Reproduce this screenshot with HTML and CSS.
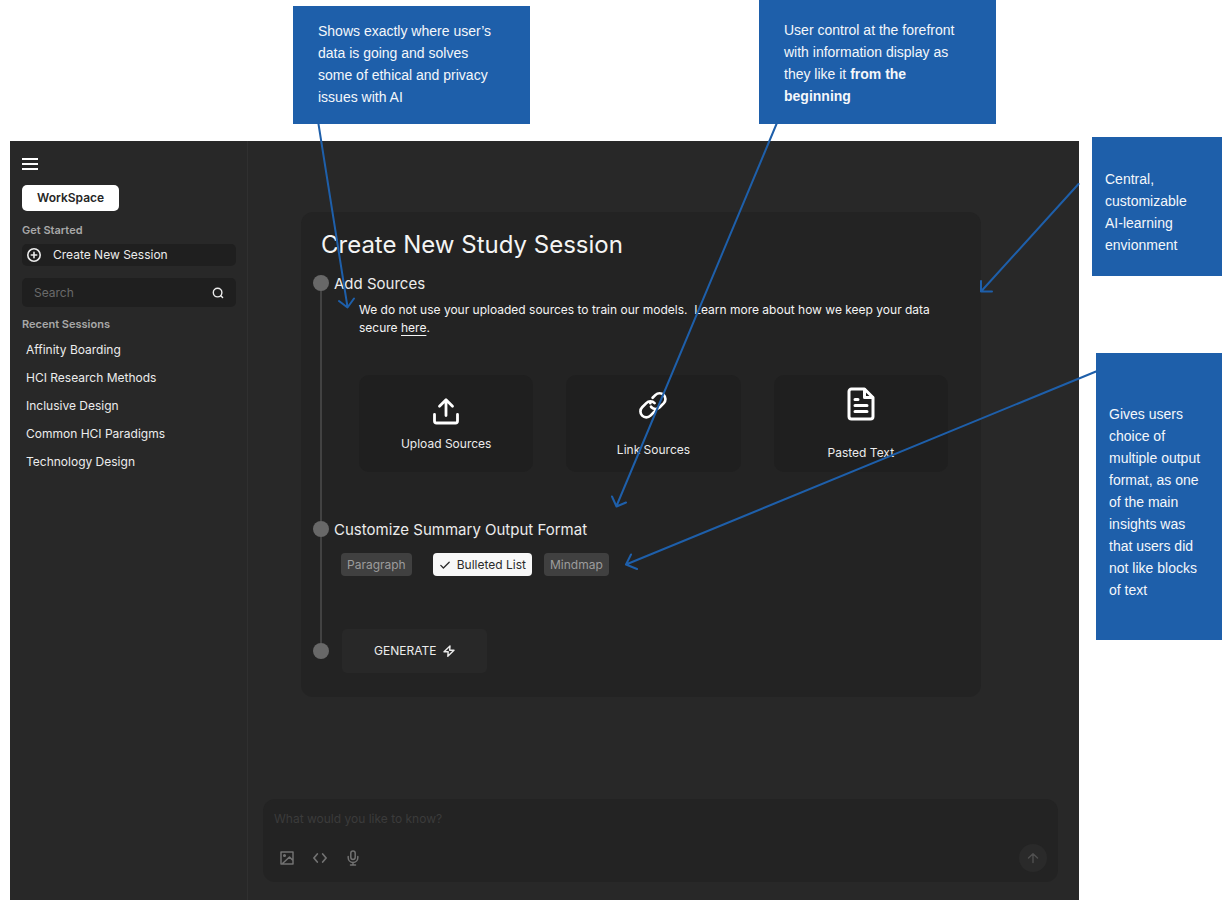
FILE: index.html
```html
<!DOCTYPE html>
<html lang="en">
<head>
<meta charset="utf-8">
<title>Create New Study Session</title>
<link rel="stylesheet" href="styles.css">
</head>
<body>
<div class="board">
  <div class="stage">
    <div class="top-notes">
      <aside class="note note-privacy">Shows exactly where user’s data is going and solves some of ethical and privacy issues with AI</aside>
      <aside class="note note-control">User control at the forefront with information display as they like it <strong>from the beginning</strong></aside>
    </div>
    <div class="app">
      <nav class="sidebar">
        <button class="menu-button" aria-label="Menu">
          <svg width="16" height="14" viewBox="0 0 16 14" fill="none" stroke="currentColor" stroke-width="2"><path d="M0 2h16M0 7h16M0 12h16"/></svg>
        </button>
        <button class="workspace">WorkSpace</button>
        <h2 class="side-heading">Get Started</h2>
        <button class="create">
          <svg width="16" height="16" viewBox="0 0 16 16" fill="none" stroke="currentColor" stroke-width="1.6" stroke-linecap="round"><circle cx="8" cy="8" r="6.2"/><path d="M8 5.3v5.4M5.3 8h5.4"/></svg>
          Create New Session
        </button>
        <div class="search">
          <input type="search" aria-label="Search" placeholder="Search">
          <svg width="12" height="12" viewBox="0 0 12 12" fill="none" stroke="currentColor" stroke-width="1.4" stroke-linecap="round"><circle cx="5.6" cy="5.6" r="4.3"/><path d="M8.800 8.800l1.800 1.800"/></svg>
        </div>
        <h2 class="side-heading recent-heading">Recent Sessions</h2>
        <ul class="recent">
          <li><a href="#">Affinity Boarding</a></li>
          <li><a href="#">HCI Research Methods</a></li>
          <li><a href="#">Inclusive Design</a></li>
          <li><a href="#">Common HCI Paradigms</a></li>
          <li><a href="#">Technology Design</a></li>
        </ul>
      </nav>
      <main class="main">
        <section class="card">
          <h1 class="card-title">Create New Study Session</h1>
          <div class="step">
            <div class="rail"><span class="dot"></span><span class="line"></span></div>
            <div class="step-body sources-step">
              <h2 class="step-title">Add Sources</h2>
              <p class="policy">We do not use your uploaded sources to train our models.&nbsp; Learn more about how we keep your data secure <a href="#">here</a>.</p>
              <div class="tiles">
                <button class="tile tile-upload">
                  <svg width="32" height="32" viewBox="0 0 32 32" fill="none" stroke="currentColor" stroke-width="2.8" stroke-linecap="round" stroke-linejoin="round"><path d="M4.500 19.500v6.500a2 2 0 0 0 2 2h19a2 2 0 0 0 2-2v-6.500M16 20.500V5M9.500 11.200L16 4.700l6.500 6.500"/></svg>
                  Upload Sources
                </button>
                <button class="tile tile-link">
                  <svg width="32" height="32" viewBox="0 0 24 24" fill="none" stroke="currentColor" stroke-width="2" stroke-linecap="round" stroke-linejoin="round"><path d="M13.200 9.860a4.400 4.400 0 0 0-6.220 0l-3.110 3.110a4.400 4.400 0 0 0 6.220 6.230l3.110-3.110a4.400 4.400 0 0 0 .9-1.400"/><path d="M10 9.900a4.400 4.400 0 0 0 .8 3.070a4.400 4.400 0 0 0 6.220 0l3.100-3.110a4.400 4.400 0 0 0-6.220-6.220l-2.200 2.200" stroke-dasharray="0 2.600 40"/></svg>
                  Link Sources
                </button>
                <button class="tile tile-text">
                  <svg width="36" height="36" viewBox="0 0 36 36" fill="none" stroke="currentColor" stroke-width="3" stroke-linecap="round" stroke-linejoin="round"><path d="M21.500 3H8.500A2.500 2.500 0 0 0 6 5.500v25A2.500 2.500 0 0 0 8.500 33h19a2.500 2.500 0 0 0 2.500-2.500v-19z"/><path d="M21.500 3.500V11.500H29.500"/><path d="M12 13.500h3M12 19.500h12M12 25.500h12"/></svg>
                  Pasted Text
                </button>
              </div>
            </div>
          </div>
          <div class="step">
            <div class="rail"><span class="dot"></span><span class="line"></span></div>
            <div class="step-body format-step">
              <h2 class="step-title">Customize Summary Output Format</h2>
              <div class="chips">
                <button class="chip chip-paragraph" aria-pressed="false">Paragraph</button>
                <button class="chip chip-selected" aria-pressed="true">
                  <svg width="12" height="12" viewBox="0 0 12 12" fill="none" stroke="currentColor" stroke-width="1.300" stroke-linecap="round" stroke-linejoin="round"><path d="M1.800 6.400l2.600 2.600 5.800-5.800"/></svg>
                  Bulleted List
                </button>
                <button class="chip" aria-pressed="false">Mindmap</button>
              </div>
            </div>
          </div>
          <div class="step">
            <div class="rail"><span class="line"></span><span class="dot"></span><span class="spacer"></span></div>
            <button class="generate">
              GENERATE
              <svg width="12" height="12" viewBox="0 0 12 12" fill="none" stroke="currentColor" stroke-width="1.400" stroke-linejoin="round"><path d="M7 1L1 6.800h4.200L4.800 11.200 11 5.200H6.700z"/></svg>
            </button>
          </div>
        </section>
        <form class="composer">
          <textarea class="prompt" rows="1" aria-label="Prompt" placeholder="What would you like to know?"></textarea>
          <div class="tools">
            <button type="button" class="tool" aria-label="Add image"><svg width="14" height="14" viewBox="0 0 14 14" fill="none" stroke="currentColor" stroke-width="1.500" stroke-linejoin="round"><path d="M1 1h12v12H1zM2.500 12.500l7-6.500L13 9.500"/><circle cx="4.500" cy="4.500" r=".8"/></svg></button>
            <button type="button" class="tool" aria-label="Add code"><svg width="14" height="14" viewBox="0 0 14 14" fill="none" stroke="currentColor" stroke-width="1.700" stroke-linecap="round" stroke-linejoin="round"><path d="M4.300 3L.9 7l3.400 4M9.700 3l3.400 4-3.400 4"/></svg></button>
            <button type="button" class="tool" aria-label="Voice input"><svg width="14" height="16" viewBox="0 0 14 16" fill="none" stroke="currentColor" stroke-width="1.500" stroke-linecap="round"><rect x="4.800" y="1" width="4.400" height="8.500" rx="2.200"/><path d="M2.200 6.500v1.200a4.800 4.800 0 0 0 9.600 0V6.500M7 12.500V15M4.500 15h5"/></svg></button>
            <button class="send" aria-label="Send"><svg width="12" height="12" viewBox="0 0 12 12" fill="none" stroke="currentColor" stroke-width="1.400" stroke-linecap="round" stroke-linejoin="round"><path d="M6 10.500V1.800M1.500 6L6 1.800 10.500 6"/></svg></button>
          </div>
        </form>
      </main>
    </div>
  </div>
  <div class="side-notes">
    <aside class="note note-central">Central, customizable <span class="keep">AI-learning</span> envionment</aside>
    <aside class="note note-output">Gives users choice of multiple output format, as one of the main insights was that users did not like blocks of text</aside>
  </div>
  <svg class="arrows" width="1227" height="914" viewBox="0 0 1227 914" fill="none" stroke="currentColor" stroke-width="2" stroke-linecap="round" stroke-linejoin="round" aria-hidden="true">
    <path d="M318.500 124L347.500 307M339 301l8.500 6.500L354 298.500"/>
    <path d="M776.500 124L616.500 506M612 496.500l4.500 10L626 502.500"/>
    <path d="M1078.500 184L981 291.500M981 281v10.500h11"/>
    <path d="M1096 371.500L626 564.500M631 554.500l-5 10L637 569"/>
  </svg>
</div>
</body>
</html>
```
FILE: styles.css
```css
* { box-sizing: border-box; }

body {
  margin: 0;
  background: #fff;
  font-family: Inter, "Liberation Sans", sans-serif;
  font-size: 12px;
  line-height: 16px;
  color: #ececec;
}

h1, h2, p, ul { margin: 0; padding: 0; font-weight: 400; }
ul { list-style: none; }
svg { display: block; flex: none; }
a { color: inherit; }

button, input, textarea {
  margin: 0;
  padding: 0;
  border: 0;
  background: none;
  font: inherit;
  color: inherit;
}

.board {
  position: relative;
  display: grid;
  grid-template-columns: 1fr 130px;
  column-gap: 13px;
  min-height: 100vh;
  padding: 0 5px 14px 10px;
}

.stage { display: flex; flex-direction: column; }

/* Annotations */
.note {
  background: #1e5faa;
  color: #f4f7fb;
  font-family: "Liberation Sans", Arial, sans-serif;
  font-size: 14px;
  line-height: 22px;
}

.top-notes {
  display: flex;
  align-items: flex-end;
  gap: 229px;
  margin-left: 283px;
  margin-bottom: 17px;
}

.note-privacy { width: 237px; padding: 14px 32px 16px 25px; }
.note-control { width: 237px; padding: 19px 32px 17px 25px; }
.side-notes { padding-top: 137px; }
.note-central { padding: 31px 13px 20px; }
.note-output { margin: 77px 0 0 4px; padding: 50px 13px 39px; }
.keep { white-space: nowrap; }

.arrows {
  position: absolute;
  top: 0;
  left: 0;
  color: #1e5faa;
  pointer-events: none;
}

/* Application window */
.app {
  flex: 1;
  display: flex;
  background: #282828;
}

.sidebar {
  display: flex;
  flex-direction: column;
  align-items: stretch;
  width: 238px;
  padding: 16px 11px 16px 12px;
  border-right: 1px solid #303030;
}

.menu-button { align-self: flex-start; height: 14px; color: #fff; }

.workspace {
  align-self: flex-start;
  height: 26px;
  margin-top: 14px;
  padding: 0 15px;
  border-radius: 5px;
  background: #fff;
  color: #262626;
  font-weight: 600;
}

.side-heading {
  margin-top: 11px;
  color: #a8a8a8;
  font-size: 11px;
  font-weight: 600;
}

.create {
  display: flex;
  align-items: center;
  gap: 11px;
  height: 22px;
  margin-top: 6px;
  padding: 0 4px;
  border-radius: 5px;
  background: #1f1f1f;
}

.search {
  display: flex;
  align-items: center;
  height: 29px;
  margin-top: 12px;
  padding: 0 12px;
  border-radius: 5px;
  background: #1f1f1f;
}

.search input { flex: 1; min-width: 0; outline: 0; }
.search input::placeholder { color: #6a6a6a; opacity: 1; }
.recent-heading { margin-top: 9px; }

.recent {
  display: flex;
  flex-direction: column;
  gap: 12px;
  margin-top: 10px;
  padding-left: 4px;
}

.recent a { text-decoration: none; }

.main {
  flex: 1;
  display: flex;
  flex-direction: column;
  padding: 71px 21px 18px 15px;
}

/* Study session card */
.card {
  margin: 0 77px 24px 38px;
  padding: 17px 33px 24px 12px;
  border-radius: 12px;
  background: #232323;
}

.card-title {
  margin: 0 0 14px 8px;
  color: #f4f4f4;
  font-size: 24px;
  line-height: 32px;
}

.step { display: flex; gap: 5px; }
.step-body { flex: 1; min-width: 0; }

.rail {
  display: flex;
  flex-direction: column;
  align-items: center;
  width: 16px;
}

.dot { width: 16px; height: 16px; border-radius: 50%; background: #686868; }
.line { flex: 1; width: 2px; background: #424242; }
.spacer { flex: 1; }
.step-title { font-size: 15px; line-height: 18px; }
.policy { margin: 8px 0 0 25px; line-height: 18px; color: #f4f4f4; }
.policy a { text-underline-offset: 3px; }
.sources-step { padding-bottom: 49px; }
.format-step { padding-bottom: 53px; }

.tiles {
  display: grid;
  grid-template-columns: repeat(3, 1fr);
  gap: 33px;
  margin: 38px 0 0 25px;
}

.tile {
  display: flex;
  flex-direction: column;
  align-items: center;
  justify-content: center;
  height: 97px;
  border-radius: 10px;
  background: #1f1f1f;
}

.tile svg { color: #fff; }
.tile-upload { gap: 9px; }
.tile-link { gap: 20px; }
.tile-text { gap: 23px; }

.chips { display: flex; gap: 12px; margin: 14px 0 0 7px; }

.chip {
  display: flex;
  align-items: center;
  gap: 6px;
  height: 23px;
  padding: 0 6px;
  border-radius: 4px;
  background: #404040;
  color: #9c9c9c;
}

.chip-paragraph { margin-right: 9px; }
.chip-selected { background: #f7f7f7; color: #2a2a2a; }

.generate {
  display: flex;
  align-items: center;
  gap: 7px;
  height: 44px;
  margin-left: 8px;
  padding: 0 32px;
  border-radius: 5px;
  background: #282828;
}

/* Prompt composer */
.composer {
  margin-top: auto;
  padding: 12px 11px 10px;
  border-radius: 12px;
  background: #232323;
}

.prompt {
  display: block;
  width: 100%;
  height: 16px;
  resize: none;
  outline: 0;
  overflow: hidden;
}

.prompt::placeholder { color: #3b3b3b; opacity: 1; }

.tools {
  display: flex;
  align-items: center;
  gap: 19px;
  margin-top: 17px;
  padding-left: 6px;
  color: #727272;
}

.send {
  display: grid;
  place-items: center;
  width: 28px;
  height: 28px;
  margin-left: auto;
  border-radius: 50%;
  background: #2a2a2a;
  color: #505050;
}
```
